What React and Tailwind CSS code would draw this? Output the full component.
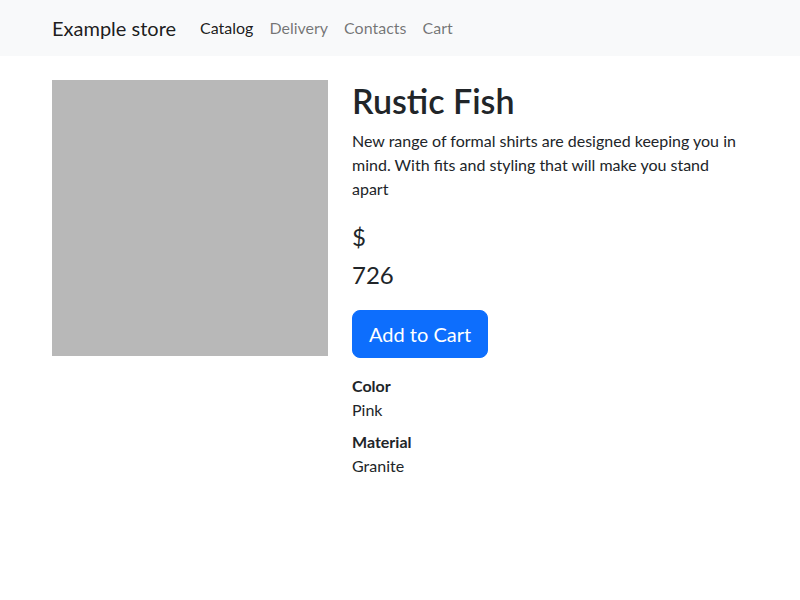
export default function App() {
  return (
    <div className="min-h-[600px] bg-white text-[#212529]" style={{ fontFamily: 'Lato, sans-serif' }}>
      <nav className="bg-[#f8f9fa] h-14 flex items-center">
        <div className="w-[720px] mx-auto px-3 flex items-center">
          <span className="text-[20px] leading-[30px] py-[5px] mr-4 text-black/90">Example store</span>
          <div className="flex text-base leading-6">
            <span className="px-2 py-2 text-black/90">Catalog</span>
            <span className="px-2 py-2 text-black/55">Delivery</span>
            <span className="px-2 py-2 text-black/55">Contacts</span>
            <span className="px-2 py-2 text-black/55">Cart</span>
          </div>
        </div>
      </nav>
      <main className="w-[720px] mx-auto px-3 mt-6 flex gap-6">
        <div className="w-[276px] h-[276px] bg-[#b8b8b8] shrink-0"></div>
        <div className="w-[396px]">
          <h1 className="text-[34px] leading-[41px] font-semibold mb-2">Rustic Fish</h1>
          <p className="text-base leading-6 mb-[17px]">New range of formal shirts are designed keeping you in mind. With fits and styling that will make you stand apart</p>
          <div className="text-[24px] leading-[38px] mb-[16px]">
            <div>$</div>
            <div>726</div>
          </div>
          <button className="bg-[#0d6efd] text-white text-[20px] leading-[30px] px-4 py-2 rounded-lg border border-[#0d6efd]">Add to Cart</button>
          <dl className="mt-4 text-base leading-6">
            <dt className="font-bold">Color</dt>
            <dd className="mb-2">Pink</dd>
            <dt className="font-bold">Material</dt>
            <dd className="mb-2">Granite</dd>
          </dl>
        </div>
      </main>
    </div>
  );
}
